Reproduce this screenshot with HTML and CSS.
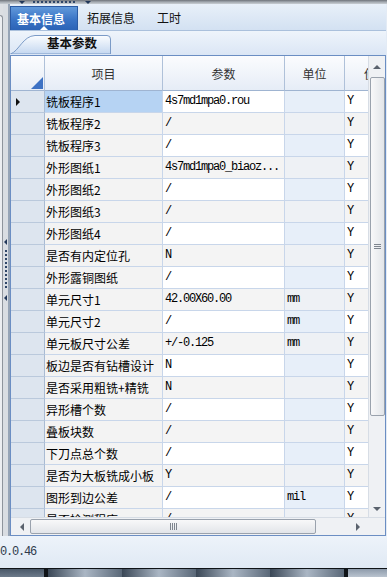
FILE: index.html
```html
<!DOCTYPE html>
<html lang="zh">
<head>
    <meta charset="UTF-8">
    <meta name="viewport" content="width=device-width, initial-scale=1.0">
    <title>基本信息</title>
    <link rel="stylesheet" href="styles.css">
</head>
<body>
<div class="window">
    <div class="top-split">
        <span class="arrow-down"></span>
        <span class="dots-h"></span>
        <span class="arrow-down"></span>
    </div>

    <div class="main">
        <div class="side">
            <div class="side-panel"></div>
            <div class="splitter">
                <span class="arrow-left"></span>
                <span class="dots-v"></span>
                <span class="arrow-left"></span>
            </div>
            <div class="side-edge"></div>
        </div>

        <div class="content">
            <div class="tabbar">
                <div class="tab active">基本信息</div>
                <div class="tab">拓展信息</div>
                <div class="tab">工时</div>
            </div>

            <div class="subbar">
                <div class="subtab">
                    <svg class="subtab-shape" width="102" height="20" viewBox="0 0 102 20">
                        <defs>
                            <linearGradient id="subtabFill" x1="0" y1="0" x2="0" y2="1">
                                <stop offset="0" stop-color="#fbfdff"/>
                                <stop offset="1" stop-color="#c4d7f0"/>
                            </linearGradient>
                        </defs>
                        <path d="M0.5 20 C9 17 13 2 25 1.5 L97 1.5 Q100.5 1.5 100.5 5 L100.5 20 Z" fill="url(#subtabFill)" stroke="#7b9bc7" stroke-width="1"/>
                    </svg>
                    <span class="subtab-label">基本参数</span>
                </div>
            </div>

            <div class="grid">
                <div class="grid-body">
                    <div class="viewport" id="viewport">
                        <div class="row head">
                            <div class="cell c0 corner-cell"><span class="corner-mark"></span></div>
                            <div class="cell c1">项目</div>
                            <div class="cell c2">参数</div>
                            <div class="cell c3">单位</div>
                            <div class="cell c4">使用</div>
                        </div>
                        <!-- rows are filled in by the script below -->
                    </div>
                    <div class="vscroll">
                        <span class="arrow-up"></span>
                        <div class="vthumb">
                            <span class="grip-line"></span>
                            <span class="grip-line"></span>
                            <span class="grip-line"></span>
                        </div>
                        <div class="vtrack"></div>
                        <span class="arrow-down-gray"></span>
                    </div>
                </div>
                <div class="grid-foot">
                    <div class="hscroll">
                        <span class="arrow-left-gray"></span>
                        <div class="hthumb">
                            <span class="grip-vline"></span>
                            <span class="grip-vline"></span>
                            <span class="grip-vline"></span>
                            <span class="grip-vline"></span>
                        </div>
                        <div class="htrack"></div>
                        <span class="arrow-right-gray"></span>
                    </div>
                    <div class="corner"></div>
                </div>
            </div>
        </div>
    </div>

    <div class="status">0.0.46</div>

    <div class="taskbar">
        <span class="seg seg-a"></span>
        <span class="seg-gap"></span>
        <span class="seg seg-b"></span>
        <span class="seg seg-b"></span>
        <span class="seg seg-b"></span>
        <span class="seg seg-b"></span>
        <span class="seg-gap"></span>
        <span class="seg seg-c"></span>
    </div>
</div>

<script>
    let params = [
        { name: '铣板程序1', value: '4s7md1mpa0.rou', unit: '', flag: 'Y' },
        { name: '铣板程序2', value: '/', unit: '', flag: 'Y' },
        { name: '铣板程序3', value: '/', unit: '', flag: 'Y' },
        { name: '外形图纸1', value: '4s7md1mpa0_biaoz...', unit: '', flag: 'Y' },
        { name: '外形图纸2', value: '/', unit: '', flag: 'Y' },
        { name: '外形图纸3', value: '/', unit: '', flag: 'Y' },
        { name: '外形图纸4', value: '/', unit: '', flag: 'Y' },
        { name: '是否有内定位孔', value: 'N', unit: '', flag: 'Y' },
        { name: '外形露铜图纸', value: '/', unit: '', flag: 'Y' },
        { name: '单元尺寸1', value: '42.00X60.00', unit: 'mm', flag: 'Y' },
        { name: '单元尺寸2', value: '/', unit: 'mm', flag: 'Y' },
        { name: '单元板尺寸公差', value: '+/-0.125', unit: 'mm', flag: 'Y' },
        { name: '板边是否有钻槽设计', value: 'N', unit: '', flag: 'Y' },
        { name: '是否采用粗铣+精铣', value: 'N', unit: '', flag: 'Y' },
        { name: '异形槽个数', value: '/', unit: '', flag: 'Y' },
        { name: '叠板块数', value: '/', unit: '', flag: 'Y' },
        { name: '下刀点总个数', value: '/', unit: '', flag: 'Y' },
        { name: '是否为大板铣成小板', value: 'Y', unit: '', flag: 'Y' },
        { name: '图形到边公差', value: '/', unit: 'mil', flag: 'Y' },
        { name: '是否检测程序', value: '/', unit: '', flag: 'Y' }
    ];

    let viewport = document.getElementById('viewport');

    params.forEach((item, index) => {
        let row = document.createElement('div');
        row.classList.add('row');
        row.classList.add(index % 2 === 0 ? 'odd' : 'even');
        if (index === 0) {
            row.classList.add('selected');
        }
        row.innerHTML =
            `<div class="cell c0">${index === 0 ? '<span class="current"></span>' : ''}</div>` +
            `<div class="cell c1">${item.name}</div>` +
            `<div class="cell c2 mono">${item.value}</div>` +
            `<div class="cell c3 mono">${item.unit}</div>` +
            `<div class="cell c4 mono">${item.flag}</div>`;
        viewport.appendChild(row);
    });
</script>
</body>
</html>
```

FILE: styles.css
```css
* {
    box-sizing: border-box;
}

body {
    margin: 0;
    width: 387px;
    height: 577px;
    overflow: hidden;
    font-family: "Noto Sans CJK SC", "Liberation Sans", sans-serif;
    font-size: 12px;
    color: #111;
    background-color: #e3ebf5;
}

.window {
    display: flex;
    flex-direction: column;
    height: 577px;
}

/* top splitter */
.top-split {
    height: 4px;
    display: flex;
    align-items: flex-start;
    gap: 8px;
    padding-left: 19px;
    background: linear-gradient(#6e737a, #a3a9b0 50%, #c9ced4);
}

.arrow-down {
    margin-top: 1px;
    border-left: 3px solid transparent;
    border-right: 3px solid transparent;
    border-top: 3px solid #22385a;
}

.dots-h {
    margin-top: 1px;
    width: 44px;
    height: 2px;
    background: repeating-linear-gradient(to right, #2f4668 0 2px, transparent 2px 4px);
}

.main {
    display: flex;
    height: 532px;
}

/* left splitter */
.side {
    width: 10px;
    display: flex;
    background-color: #dcdfe3;
}

.side-panel {
    width: 3px;
    margin-top: 11px;
    background-color: #eceef1;
    border-top: 1px solid #8e949c;
    border-right: 1px solid #8e949c;
    border-top-right-radius: 4px;
}

.splitter {
    width: 5px;
    display: flex;
    flex-direction: column;
    align-items: center;
    justify-content: center;
    gap: 5px;
    background-color: #d9dde2;
}

.arrow-left {
    border-top: 3px solid transparent;
    border-bottom: 3px solid transparent;
    border-right: 3px solid #22385a;
}

.dots-v {
    width: 2px;
    height: 40px;
    background: repeating-linear-gradient(#2f4668 0 2px, transparent 2px 4px);
}

.side-edge {
    width: 2px;
    background-color: #96a4b6;
}

.content {
    flex: 1;
    display: flex;
    flex-direction: column;
    padding-right: 1px;
}

/* tabs */
.tabbar {
    height: 27px;
    display: flex;
    align-items: flex-end;
    background: linear-gradient(#e8f0f9, #d3e1f2);
    border-bottom: 1px solid #aac0dc;
}

.tab {
    height: 24px;
    line-height: 23px;
    padding: 0 13px 0 9px;
    color: #111;
    font-size: 12px;
    white-space: nowrap;
}

.tab.active {
    position: relative;
    width: 68px;
    padding: 0 0 0 6px;
    color: white;
    font-weight: bold;
    background: linear-gradient(#6199da, #3a74c6 55%, #2b63b6);
    border: 1px solid #2a5aa3;
    border-bottom: none;
}

.tab.active::after {
    content: "";
    position: absolute;
    left: 29px;
    bottom: 0;
    border-left: 4px solid transparent;
    border-right: 4px solid transparent;
    border-bottom: 4px solid white;
}

/* sub tab strip */
.subbar {
    height: 24px;
    display: flex;
    align-items: flex-end;
    padding-bottom: 1px;
    background: linear-gradient(#eef4fb, #dbe6f5);
}

.subtab {
    position: relative;
    width: 102px;
    height: 20px;
}

.subtab-shape {
    position: absolute;
    left: 0;
    top: 0;
}

.subtab-label {
    position: relative;
    display: block;
    padding-left: 37px;
    line-height: 18px;
    font-size: 12.5px;
    font-weight: bold;
    color: #111;
}

/* data grid */
.grid {
    height: 481px;
    display: flex;
    flex-direction: column;
    border: 1px solid #6b8ec3;
    background-color: white;
}

.grid-body {
    display: flex;
    height: 461px;
}

.viewport {
    width: 357px;
    overflow: hidden;
}

.row {
    display: flex;
    width: 394px;
    height: 22px;
}

.cell {
    flex: none;
    height: 100%;
    padding-left: 1px;
    line-height: 21px;
    white-space: nowrap;
    overflow: hidden;
    border-right: 1px solid #c8d6ea;
    border-bottom: 1px solid #c8d6ea;
}

.c0 { width: 34px; }
.c1 { width: 118px; }
.c2 { width: 122px; padding-left: 2px; }
.c3 { width: 60px; padding-left: 2px; }
.c4 { width: 60px; padding-left: 2px; }

.mono {
    font-family: "Liberation Mono", monospace;
    font-size: 12px;
    letter-spacing: -1.2px;
    color: #000;
}

.row .c0 {
    display: flex;
    align-items: center;
    padding-left: 5px;
    background-color: #dde5ef;
    border-right-color: #a9bbd3;
    border-bottom-color: #bac9dc;
}

.row .c1 {
    background-color: #f3f3f3;
    color: #000;
}

.row.odd .c2,
.row.odd .c4 {
    background-color: white;
}

.row.even .c2,
.row.even .c4 {
    background-color: #f4f4f4;
}

.row.odd .c3 {
    background-color: #e7eff9;
}

.row.even .c3 {
    background-color: #eef1f5;
}

.row.selected .c1 {
    background-color: #b6d3f3;
}

.current {
    border-top: 4px solid transparent;
    border-bottom: 4px solid transparent;
    border-left: 4px solid #111;
}

.row.head {
    height: 35px;
    background: linear-gradient(#fbfcfe, #e5ecf6);
}

.row.head .cell {
    padding: 3px 0 0 0;
    line-height: 30px;
    text-align: center;
    color: #333;
    background: none;
    border-right-color: #afc1d9;
    border-bottom-color: #9fb4d1;
}

.row.head .corner-cell {
    display: flex;
    align-items: flex-end;
    justify-content: flex-end;
    padding: 0 1px 1px 0;
}

.corner-mark {
    border-left: 12px solid transparent;
    border-bottom: 12px solid #3d72c4;
}

.row.head .c4 {
    text-align: left;
    padding-left: 19px;
}

/* scrollbars */
.vscroll {
    width: 17px;
    display: flex;
    flex-direction: column;
    align-items: center;
    background-color: #eff1f4;
    border-left: 1px solid #d7dde5;
}

.arrow-up {
    margin: 9px 0 8px;
    border-left: 4px solid transparent;
    border-right: 4px solid transparent;
    border-bottom: 4px solid #5a626d;
}

.vthumb {
    width: 15px;
    height: 339px;
    display: flex;
    flex-direction: column;
    align-items: center;
    justify-content: center;
    gap: 1px;
    border: 1px solid #9aa2ad;
    border-radius: 2px;
    background: linear-gradient(to right, #f8f8f9, #e2e5e9);
}

.grip-line {
    width: 7px;
    height: 1px;
    background-color: #7e858e;
}

.vtrack {
    flex: 1;
}

.arrow-down-gray {
    margin-bottom: 6px;
    border-left: 4px solid transparent;
    border-right: 4px solid transparent;
    border-top: 4px solid #5a626d;
}

.grid-foot {
    display: flex;
    height: 18px;
}

.hscroll {
    width: 357px;
    display: flex;
    align-items: center;
    padding: 0 8px 0 9px;
    background-color: #eff1f4;
    border-top: 1px solid #d7dde5;
}

.arrow-left-gray {
    border-top: 4px solid transparent;
    border-bottom: 4px solid transparent;
    border-right: 4px solid #5a626d;
}

.hthumb {
    width: 286px;
    height: 15px;
    margin-left: 6px;
    display: flex;
    align-items: center;
    justify-content: center;
    gap: 1px;
    border: 1px solid #9aa2ad;
    border-radius: 2px;
    background: linear-gradient(#f8f8f9, #e2e5e9);
}

.grip-vline {
    width: 1px;
    height: 7px;
    background-color: #7e858e;
}

.htrack {
    flex: 1;
}

.arrow-right-gray {
    border-top: 4px solid transparent;
    border-bottom: 4px solid transparent;
    border-left: 4px solid #5a626d;
}

.corner {
    flex: 1;
    background-color: #eff1f4;
    border-top: 1px solid #d7dde5;
}

/* status + bottom bar */
.status {
    height: 32px;
    line-height: 32px;
    font-family: "Liberation Mono", monospace;
    font-size: 12px;
    letter-spacing: -1.2px;
    color: #2e3a4c;
    background: linear-gradient(#edf3fa, #e0e9f4);
}

.taskbar {
    height: 9px;
    display: flex;
    border-top: 1px solid #0f1317;
    background-color: #0f1317;
}

.seg {
    height: 100%;
}

.seg-a {
    width: 44px;
    background: linear-gradient(#4a5868, #6c7a8a);
}

.seg-gap {
    width: 4px;
    background-color: #0f1317;
}

.seg-b {
    width: 74px;
    background: linear-gradient(to right, #3a4756, #aab6c4 50%, #5a6878);
}

.seg-c {
    flex: 1;
    background: linear-gradient(#8e9bab, #b9c3cf);
}
```
